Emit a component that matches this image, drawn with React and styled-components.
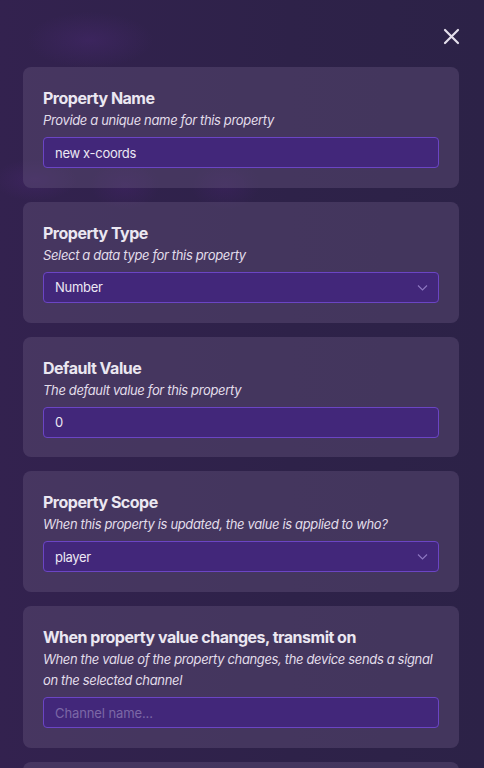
import React from 'react';
import styled, { createGlobalStyle } from 'styled-components';

const GlobalStyle = createGlobalStyle`
  html, body {
    margin: 0;
    padding: 0;
    height: 100%;
  }
  body {
    background-color: #2e2249;
    background-image:
      radial-gradient(ellipse 90px 40px at 90px 40px, rgba(70, 40, 110, 0.5), transparent 70%),
      radial-gradient(ellipse 60px 30px at 35px 180px, rgba(75, 40, 115, 0.4), transparent 70%),
      radial-gradient(ellipse 50px 35px at 125px 185px, rgba(70, 35, 110, 0.4), transparent 70%),
      radial-gradient(ellipse 50px 35px at 225px 185px, rgba(70, 35, 110, 0.35), transparent 70%),
      linear-gradient(90deg, #33224f 0%, #2e2249 60%, #2c2247 100%);
    font-family: Inter, "Noto Sans", sans-serif;
    color: #ece8f2;
    overflow: hidden;
  }
  * { box-sizing: border-box; }
`;

const Page = styled.div`
  height: 768px;
  overflow: hidden;
  display: flex;
  flex-direction: column;
`;

const Header = styled.div`
  height: 67px;
  flex-shrink: 0;
  display: flex;
  justify-content: flex-end;
  align-items: flex-start;
  padding: 26px 23px 0 0;
`;

const CloseButton = styled.button`
  background: transparent;
  border: none;
  padding: 0;
  width: 20px;
  height: 20px;
  cursor: pointer;
  display: flex;
  align-items: center;
  justify-content: center;
`;

const CardList = styled.div`
  display: flex;
  flex-direction: column;
  gap: 14px;
  padding: 0 25px 0 23px;
`;

const Card = styled.div`
  flex-shrink: 0;
  background: rgba(95, 80, 120, 0.45);
  border-radius: 8px;
  padding: 20px 20px 19.75px;
  min-height: ${({ $stub }) => ($stub ? '60px' : 'auto')};
  display: flex;
  flex-direction: column;
`;

const Title = styled.div`
  font-size: 16px;
  font-weight: 700;
  line-height: 22px;
  color: #ebe7f1;
  letter-spacing: -0.5px;
`;

const Hint = styled.div`
  font-size: 13px;
  font-style: italic;
  line-height: 21px;
  color: #e2ddea;
  letter-spacing: -0.35px;
  margin-top: 1px;
  margin-bottom: 6px;
`;

const Field = styled.div`
  position: relative;
  height: 31px;
  border: 1px solid #6b45c4;
  border-radius: 4px;
  background: #42277a;
  display: flex;
  align-items: center;
  padding: 0 11px;
  font-size: 13px;
  letter-spacing: ${({ $placeholder }) => ($placeholder ? '-0.1px' : '-0.3px')};
  color: ${({ $placeholder }) => ($placeholder ? '#7c68a6' : '#ece8f4')};
`;

const Chevron = styled.svg`
  position: absolute;
  right: 10px;
  top: 11px;
`;

const XIcon = () => (
  <svg width="17" height="17" viewBox="0 0 17 17">
    <path d="M2 2 L15 15 M15 2 L2 15" stroke="#e4dfeb" strokeWidth="2.2" strokeLinecap="round" />
  </svg>
);

const fields = [
  {
    title: 'Property Name',
    hint: 'Provide a unique name for this property',
    value: 'new x-coords',
  },
  {
    title: 'Property Type',
    hint: 'Select a data type for this property',
    value: 'Number',
    select: true,
  },
  {
    title: 'Default Value',
    hint: 'The default value for this property',
    value: '0',
  },
  {
    title: 'Property Scope',
    hint: 'When this property is updated, the value is applied to who?',
    value: 'player',
    select: true,
  },
  {
    title: 'When property value changes, transmit on',
    hint: 'When the value of the property changes, the device sends a signal on the selected channel',
    value: 'Channel name...',
    placeholder: true,
  },
];

export default function App() {
  return (
    <>
      <GlobalStyle />
      <Page>
        <Header>
          <CloseButton aria-label="Close">
            <XIcon />
          </CloseButton>
        </Header>
        <CardList>
          {fields.map((f) => (
            <Card key={f.title}>
              <Title>{f.title}</Title>
              <Hint>{f.hint}</Hint>
              <Field $placeholder={f.placeholder}>
                {f.value}
                {f.select && (
                  <Chevron width="11" height="8" viewBox="0 0 11 8">
                    <path d="M1 1.5 L5.5 6 L10 1.5" fill="none" stroke="#8c76c0" strokeWidth="1.2" />
                  </Chevron>
                )}
              </Field>
            </Card>
          ))}
          <Card $stub />
        </CardList>
      </Page>
    </>
  );
}
